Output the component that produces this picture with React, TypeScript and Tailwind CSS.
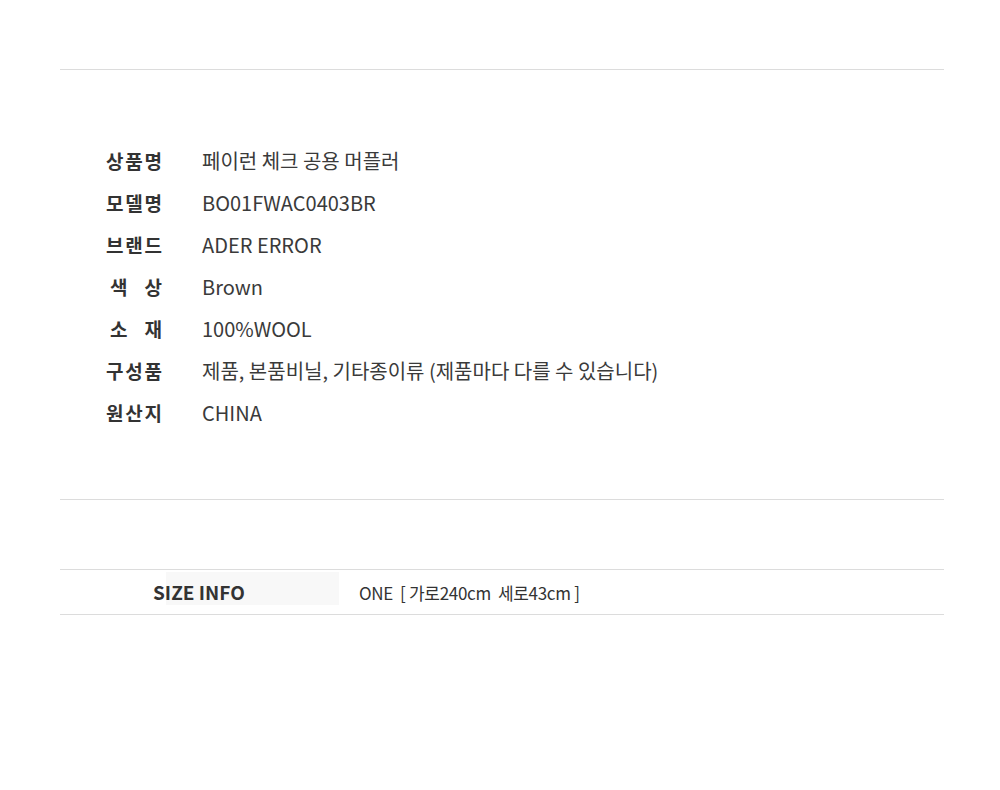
import React from "react";

interface InfoRow {
  label: string[];
  value: string;
}

const rows: InfoRow[] = [
  { label: ["상", "품", "명"], value: "페이런 체크 공용 머플러" },
  { label: ["모", "델", "명"], value: "BO01FWAC0403BR" },
  { label: ["브", "랜", "드"], value: "ADER ERROR" },
  { label: ["색", "상"], value: "Brown" },
  { label: ["소", "재"], value: "100%WOOL" },
  { label: ["구", "성", "품"], value: "제품, 본품비닐, 기타종이류 (제품마다 다를 수 있습니다)" },
  { label: ["원", "산", "지"], value: "CHINA" },
];

export default function App() {
  return (
    <div
      className="w-[1000px] h-[790px] bg-white text-[#333]"
      style={{ fontFamily: '"Noto Sans CJK KR", "Noto Sans", sans-serif' }}
    >
      <div className="ml-[60px] w-[884px] pt-[69px]">
        {/* product info */}
        <div className="border-t border-[#dcdcdc] pt-[70px] pb-[65px]">
          {rows.map((row) => (
            <div key={row.value} className="flex items-center h-[42px]">
              <div className="w-[142px] pl-[46px] text-[19px]">
                <div
                  className={`flex justify-between font-bold text-[#333] ${
                    row.label.length === 2 ? "w-[52px] ml-[4px]" : "w-[56px]"
                  }`}
                >
                  {row.label.map((c, i) => (
                    <span key={i}>{c}</span>
                  ))}
                </div>
              </div>
              <div className="text-[20px] text-[#3a3a3a]">{row.value}</div>
            </div>
          ))}
        </div>

        {/* size info */}
        <div className="border-t border-[#dcdcdc] pt-[69px]">
          <div className="border-t border-b border-[#dcdcdc] h-[46px] flex items-start">
            <div className="ml-[106px] mt-[2px] w-[173px] h-[33px] bg-[#f8f8f8] flex items-center pt-[8px]">
              <span className="-ml-[13px] text-[19px] font-bold text-[#333]">SIZE INFO</span>
            </div>
            <div className="ml-[20px] h-[37px] flex items-center pt-[8px] text-[17px] text-[#333] tracking-[-0.3px] whitespace-pre">
              {"ONE  [ 가로240cm  세로43cm ]"}
            </div>
          </div>
        </div>
      </div>
    </div>
  );
}
